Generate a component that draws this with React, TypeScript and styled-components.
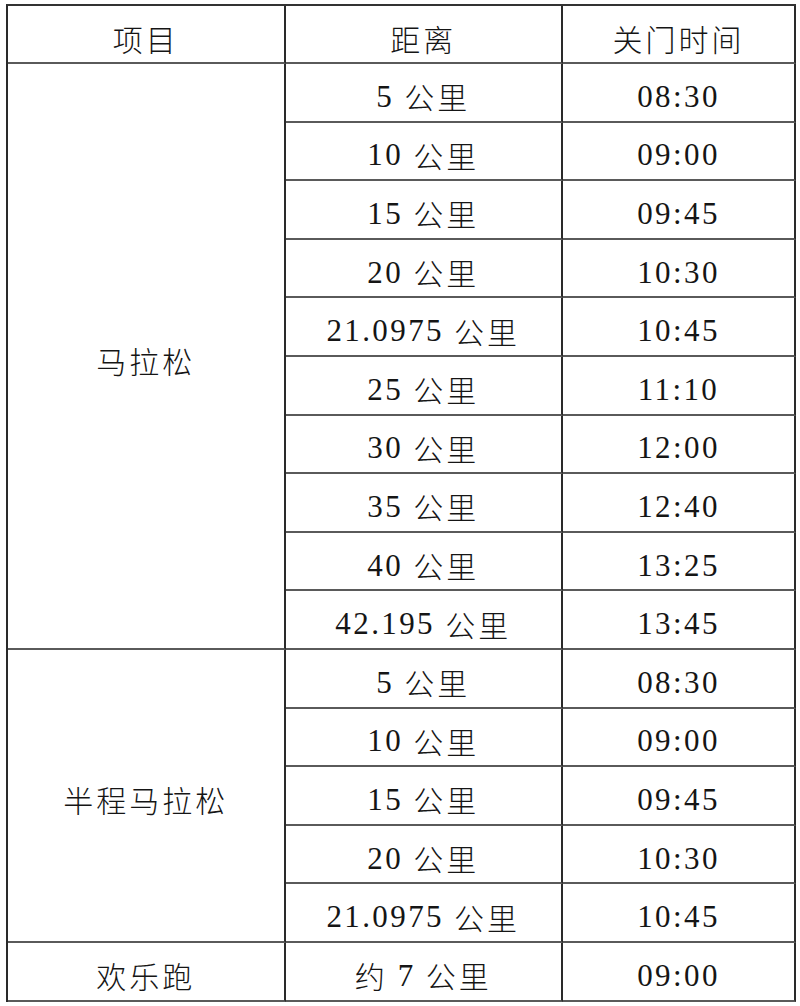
import React from "react";
import styled, { createGlobalStyle } from "styled-components";

const Global = createGlobalStyle`
  html, body { margin: 0; padding: 0; background: #fff; }
  body { font-family: "Liberation Serif", "Noto Sans CJK SC", serif; color: #151515; }
`;

const Page = styled.div`
  padding: 4px 6px 0 6px;
`;

const Grid = styled.div`
  display: grid;
  grid-template-columns: 277.5px 277.5px 233px;
  grid-template-rows: 58px repeat(16, 58.6px);
  border-top: 2px solid #333;
  border-left: 2px solid #2a2a2a;
  width: max-content;
`;

const Cell = styled.div<{ $col?: number; $row?: number | string }>`
  display: flex;
  align-items: center;
  justify-content: center;
  padding-top: 8px;
  box-sizing: border-box;
  border-right: 2px solid #2a2a2a;
  border-bottom: 2px solid #5a5a5a;
  line-height: 1;
  white-space: pre;
  ${(p) => (p.$col ? `grid-column: ${p.$col};` : "")}
  ${(p) => (p.$row ? `grid-row: ${p.$row};` : "")}
`;

const Txt = styled.span<{ $kind: "num" | "han" }>`
  font-family: ${(p) =>
    p.$kind === "num" ? `"Liberation Serif"` : `"Noto Sans CJK SC"`};
  font-weight: ${(p) => (p.$kind === "num" ? 400 : 300)};
  font-size: ${(p) => (p.$kind === "num" ? "31px" : "30px")};
  letter-spacing: ${(p) => (p.$kind === "num" ? "2.4px" : "3px")};
`;

const marathon: [string, string][] = [
  ["5", "08:30"],
  ["10", "09:00"],
  ["15", "09:45"],
  ["20", "10:30"],
  ["21.0975", "10:45"],
  ["25", "11:10"],
  ["30", "12:00"],
  ["35", "12:40"],
  ["40", "13:25"],
  ["42.195", "13:45"],
];

const half: [string, string][] = [
  ["5", "08:30"],
  ["10", "09:00"],
  ["15", "09:45"],
  ["20", "10:30"],
  ["21.0975", "10:45"],
];

function Rows({ rows, start }: { rows: [string, string][]; start: number }) {
  return (
    <>
      {rows.map(([d, t], i) => (
        <React.Fragment key={i}>
          <Cell $col={2} $row={start + i}>
            <Txt $kind="num">{d} </Txt>
            <Txt $kind="han">公里</Txt>
          </Cell>
          <Cell $col={3} $row={start + i}>
            <Txt $kind="num">{t}</Txt>
          </Cell>
        </React.Fragment>
      ))}
    </>
  );
}

export default function App() {
  return (
    <Page>
      <Global />
      <Grid>
        <Cell><Txt $kind="han">项目</Txt></Cell>
        <Cell><Txt $kind="han">距离</Txt></Cell>
        <Cell><Txt $kind="han">关门时间</Txt></Cell>

        <Cell $col={1} $row="2 / span 10"><Txt $kind="han">马拉松</Txt></Cell>
        <Rows rows={marathon} start={2} />

        <Cell $col={1} $row="12 / span 5"><Txt $kind="han">半程马拉松</Txt></Cell>
        <Rows rows={half} start={12} />

        <Cell $col={1} $row={17}><Txt $kind="han">欢乐跑</Txt></Cell>
        <Cell $col={2} $row={17}>
          <Txt $kind="han">约</Txt>
          <Txt $kind="num"> 7 </Txt>
          <Txt $kind="han">公里</Txt>
        </Cell>
        <Cell $col={3} $row={17}><Txt $kind="num">09:00</Txt></Cell>
      </Grid>
    </Page>
  );
}
